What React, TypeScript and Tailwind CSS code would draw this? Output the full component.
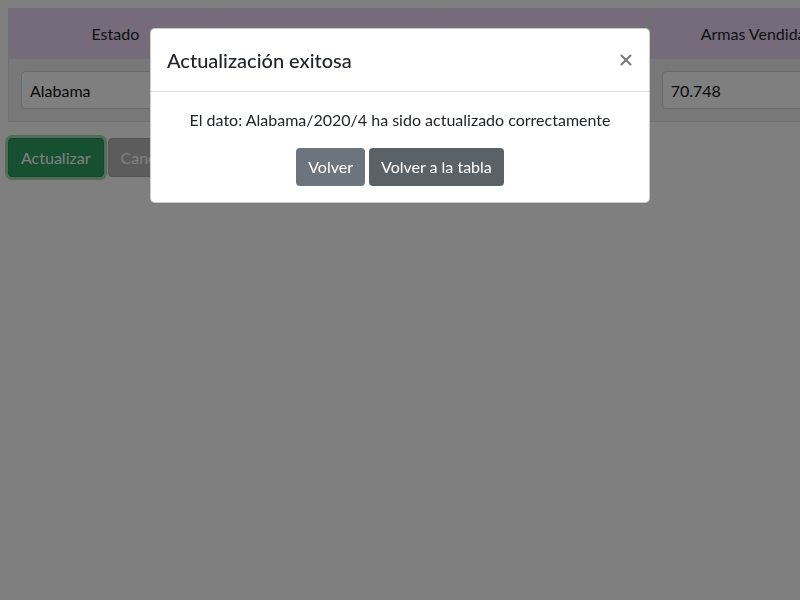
import { X } from 'lucide-react';

const cols = [
  { label: 'Estado', value: 'Alabama' },
  { label: 'Año', value: '2020' },
  { label: 'Mes', value: '4' },
  { label: 'Armas Vendidas', value: '70.748' },
];

export default function App() {
  return (
    <div className="relative h-[600px] w-[800px] overflow-hidden bg-white text-[#212529]" style={{ fontFamily: 'Lato, "Noto Sans", sans-serif' }}>
      <div className="p-2">
        <table className="w-[856px] border-collapse border border-[#dee2e6]">
          <thead>
            <tr className="bg-[#ecd7f5]">
              {cols.map(c => (
                <th key={c.label} className="h-[50px] w-[214px] border-r border-[#dee2e6] px-3 text-center text-base font-normal leading-6">
                  {c.label}
                </th>
              ))}
            </tr>
          </thead>
          <tbody>
            <tr className="border-t border-[#dee2e6] bg-[#f1f1f1]">
              {cols.map(c => (
                <td key={c.label} className="px-3 py-3">
                  <input
                    readOnly
                    value={c.value}
                    className="h-[38px] w-full rounded border border-[#ced4da] bg-white px-2 text-base text-[#111] outline-none"
                  />
                </td>
              ))}
            </tr>
          </tbody>
        </table>
        <div className="mt-4 flex gap-1">
          <button className="h-[39px] rounded border border-[#2b9157] bg-[#2f9f62] px-3 text-base text-white shadow-[0_0_0_3px_rgba(72,180,97,0.5)]">
            Actualizar
          </button>
          <button className="h-[39px] rounded border border-[#aaa] bg-[#b8b8b8] px-3 text-base text-white">
            Cancelar
          </button>
        </div>
      </div>

      <div className="fixed inset-0 bg-black/50">
        <div className="mx-auto mt-[28px] w-[500px] rounded-[5px] border border-black/20 bg-white">
          <div className="flex items-center justify-between border-b border-[#dee2e6] px-4 py-4">
            <h5 className="text-xl font-medium leading-[30px]">Actualización exitosa</h5>
            <X className="-mr-[2px] h-[18px] w-[18px] text-[#7a7a7a]" strokeWidth={2.75} />
          </div>
          <div className="p-4 text-center">
            <p className="mb-4 text-base leading-6">El dato: Alabama/2020/4 ha sido actualizado correctamente</p>
            <div className="flex justify-center gap-1">
              <button className="h-[38px] rounded bg-[#6c757d] px-3 text-base text-white">Volver</button>
              <button className="h-[38px] rounded bg-[#5a6268] px-3 text-base text-white">Volver a la tabla</button>
            </div>
          </div>
        </div>
      </div>
    </div>
  );
}
